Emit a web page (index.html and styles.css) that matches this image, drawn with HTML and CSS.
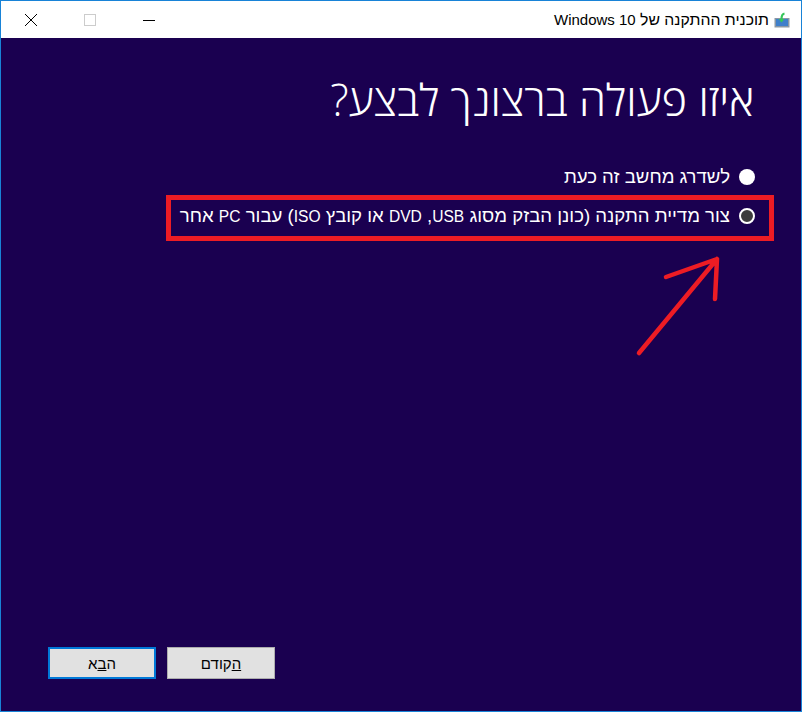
FILE: index.html
```html
<!DOCTYPE html>
<html lang="he" dir="rtl">
<head>
<meta charset="utf-8">
<title>תוכנית ההתקנה של Windows 10</title>
<link rel="stylesheet" href="styles.css">
</head>
<body>
<div class="window">
  <header class="titlebar">
    <svg class="app-icon" width="16" height="16" viewBox="0 0 16 16">
      <rect x="0.5" y="6" width="15" height="9.5" fill="#8a97a5"/>
      <rect x="2" y="7" width="12" height="7" fill="#3f7fcb"/>
      <path d="M10.5 1.5C8 2 7.5 4 7.5 7" stroke="#35c55a" stroke-width="2.2" fill="none"/>
      <path d="M4.5 7h6l-3 3.5z" fill="#35c55a"/>
    </svg>
    <span class="title">תוכנית ההתקנה של <span class="latin-title">Windows 10</span></span>
    <div class="controls">
      <svg class="ctl" width="12" height="12" viewBox="0 0 12 12"><path d="M0 6.5h12" stroke="#000" stroke-width="1"/></svg>
      <svg class="ctl" width="12" height="12" viewBox="0 0 12 12"><rect x="0.5" y="0.5" width="11" height="11" fill="none" stroke="#ccc"/></svg>
      <svg class="ctl" width="12" height="12" viewBox="0 0 12 12"><path d="M0 0l12 12M12 0L0 12" stroke="#000" stroke-width="1"/></svg>
    </div>
  </header>
  <main class="content">
    <h1 class="heading">איזו פעולה ברצונך לבצע?</h1>
    <div class="options">
      <div class="option"><span class="radio"></span><span class="label">לשדרג מחשב זה כעת</span></div>
      <div class="option"><span class="radio checked"></span><span class="label">צור מדיית התקנה (כונן הבזק מסוג <span class="latin">USB</span>,&rlm; <span class="latin">DVD</span> או קובץ <span class="latin">ISO</span>) עבור <span class="latin">PC</span> אחר</span></div>
    </div>
    <div class="footer">
      <button class="btn"><u>ה</u>קודם</button>
      <button class="btn primary">ה<u>ב</u>א</button>
    </div>
    <div class="red-box"></div>
    <svg class="arrow" width="120" height="125" viewBox="0 0 120 125">
      <path d="M19 113L97 19M46 37L97 19L95 59" fill="none" stroke="#ed1c24" stroke-width="4.5" stroke-linecap="round" stroke-linejoin="round"/>
    </svg>
  </main>
</div>
</body>
</html>
```
FILE: styles.css
```css
html, body { margin: 0; padding: 0; }
body { width: 802px; height: 712px; overflow: hidden; font-family: "Liberation Sans", Arial, sans-serif; }
.window {
  box-sizing: border-box;
  width: 802px;
  height: 712px;
  border: 1px solid #1883d7;
  display: flex;
  flex-direction: column;
  position: relative;
}
.titlebar {
  height: 37px;
  flex: none;
  background: #fff;
  display: flex;
  align-items: center;
  padding-right: 11px;
  gap: 5px;
}
.title { font-size: 15.8px; color: #000; white-space: nowrap; }
.latin-title { font-size: 15px; }
.controls {
  margin-right: auto;
  display: flex;
  gap: 47px;
  padding-left: 24px;
}
.ctl { display: block; }
.content {
  flex: 1;
  background: #1a0050;
  color: #fff;
  display: flex;
  flex-direction: column;
  padding-right: 47px;
}
.heading {
  margin: 35px 0 0;
  font-family: "Open Sans", "Liberation Sans", sans-serif;
  font-weight: 300;
  font-size: 43.5px;
  line-height: 54px;
  color: #fff;
}
.options { margin: 40px -1px 0 0; display: flex; flex-direction: column; gap: 20px; }
.option { display: flex; align-items: center; gap: 9px; height: 19px; font-size: 18.6px; }
.latin { font-size: 15.6px; }
.radio {
  width: 16px; height: 16px;
  box-sizing: border-box;
  border-radius: 50%;
  background: #fff;
  flex: none;
}
.radio.checked { background: #3c3c3c; border: 2px solid #fff; }
.label { white-space: nowrap; }
.footer {
  margin: auto -47px 32px 0;
  display: flex;
  gap: 11px;
  padding-left: 47px;
  justify-content: flex-end;
}
.btn {
  width: 108px;
  height: 32px;
  box-sizing: border-box;
  background: #e1e1e1;
  border: 1px solid #adadad;
  font: 15px "Liberation Sans", Arial, sans-serif;
  color: #000;
  padding: 0;
}
.btn.primary { border: 2px solid #0078d7; }
.red-box {
  position: absolute;
  box-sizing: border-box;
  left: 165px; top: 194px;
  width: 608px; height: 46px;
  border: 5px solid #ed1c24;
}
.arrow { position: absolute; left: 619px; top: 239px; }
```
